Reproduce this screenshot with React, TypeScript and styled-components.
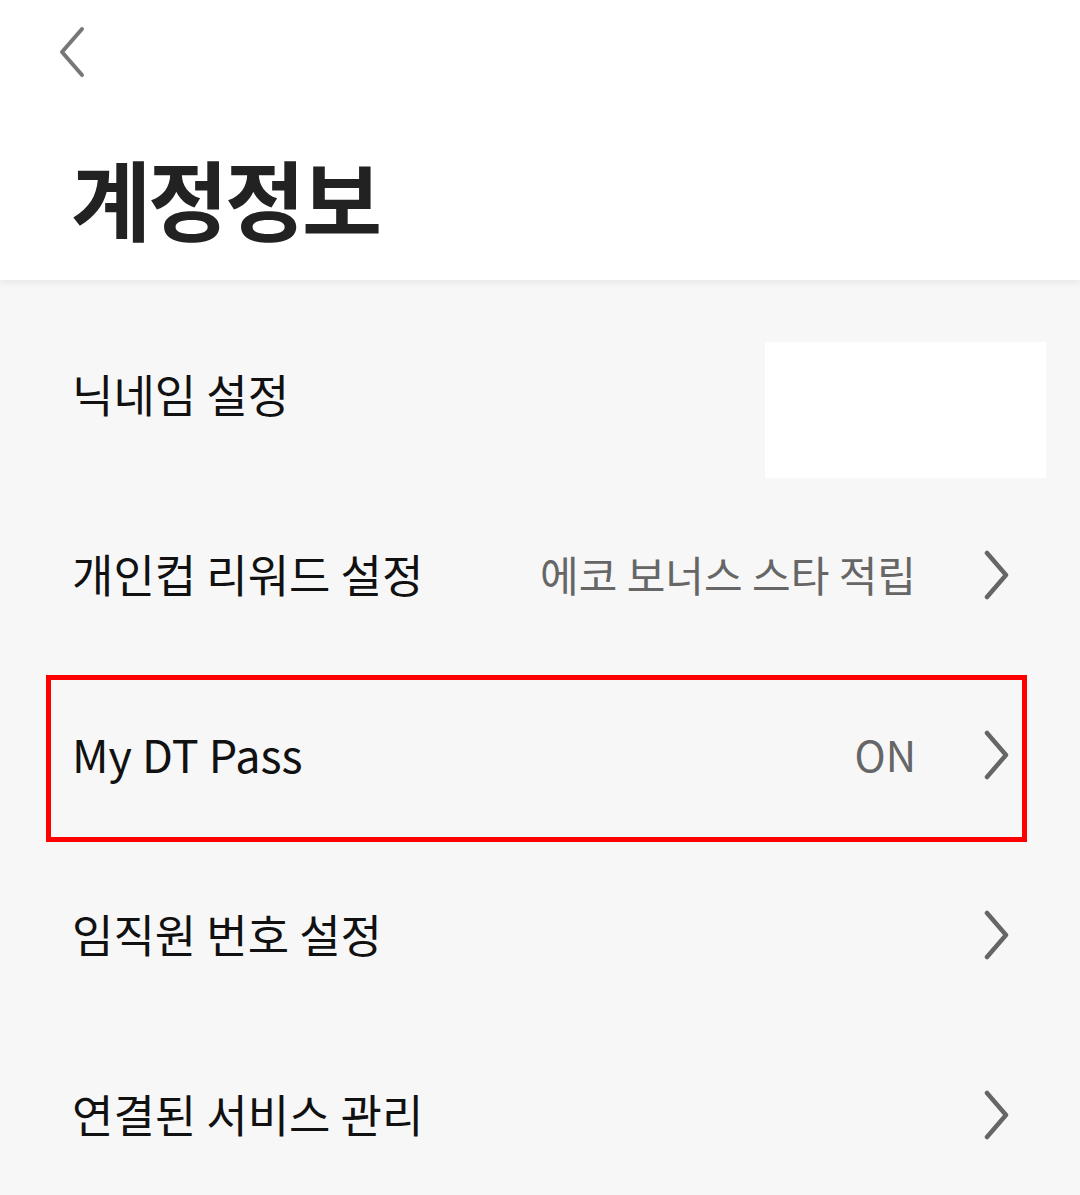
import React from "react";
import styled, { createGlobalStyle } from "styled-components";

const GlobalStyle = createGlobalStyle`
	html, body {
		margin: 0;
		padding: 0;
		background: #f7f7f7;
	}
	body {
		font-family: "Noto Sans CJK KR", "Noto Sans", sans-serif;
	}
`;

type RowItem = {
	label: string;
	value?: string;
	arrow: boolean;
	masked?: boolean;
	highlighted?: boolean;
};

const rows: RowItem[] = [
	{ label: "닉네임 설정", arrow: false, masked: true },
	{ label: "개인컵 리워드 설정", value: "에코 보너스 스타 적립", arrow: true },
	{ label: "My DT Pass", value: "ON", arrow: true, highlighted: true },
	{ label: "임직원 번호 설정", arrow: true },
	{ label: "연결된 서비스 관리", arrow: true },
];

const ChevronRight = () => (
	<svg width='26' height='50' viewBox='0 0 26 50'>
		<path
			d='M3 3 L22 25 L3 47'
			fill='none'
			stroke='#666'
			strokeWidth='4.5'
			strokeLinecap='round'
			strokeLinejoin='round'
		/>
	</svg>
);

const ChevronLeft = () => (
	<svg width='28' height='52' viewBox='0 0 28 52'>
		<path
			d='M24 3 L4 26 L24 49'
			fill='none'
			stroke='#777'
			strokeWidth='4'
			strokeLinecap='round'
			strokeLinejoin='round'
		/>
	</svg>
);

export default function App() {
	return (
		<>
			<GlobalStyle />
			<Page>
				<Header>
					<BackButton aria-label='back'>
						<ChevronLeft />
					</BackButton>
					<Title>계정정보</Title>
				</Header>
				<List>
					{rows.map((item, index) => (
						<Row key={index} highlighted={item.highlighted}>
							<Label>{item.label}</Label>
							<Right>
								{item.masked && <MaskBox />}
								{item.value && <Value>{item.value}</Value>}
								{item.arrow && (
									<Arrow>
										<ChevronRight />
									</Arrow>
								)}
							</Right>
						</Row>
					))}
				</List>
			</Page>
		</>
	);
}

const Page = styled.div`
	width: 1080px;
	min-height: 1195px;
	background: #f7f7f7;
	overflow: hidden;
`;

const Header = styled.header`
	height: 280px;
	background: #fff;
	box-sizing: border-box;
	padding: 26px 0 0 0;
	position: relative;
	box-shadow: 0 2px 8px rgba(0, 0, 0, 0.08);
	z-index: 1;
`;

const BackButton = styled.button`
	display: block;
	border: none;
	background: none;
	padding: 0;
	margin-left: 58px;
	height: 52px;
	cursor: pointer;
`;

const Title = styled.h1`
	margin: 76px 0 0 71px;
	font-size: 87px;
	line-height: 1;
	font-weight: 700;
	color: #222;
	letter-spacing: -3px;
`;

const List = styled.div`
	padding-top: 25px;
`;

const Row = styled.div<{ highlighted?: boolean }>`
	position: relative;
	height: 180px;
	display: flex;
	align-items: center;
	justify-content: space-between;
	padding: 0 72px 0 72px;
	&::after {
		content: "";
		display: ${(p) => (p.highlighted ? "block" : "none")};
		position: absolute;
		left: 46px;
		top: 10px;
		width: 981px;
		height: 167px;
		box-sizing: border-box;
		border: 5px solid #ff0000;
		pointer-events: none;
	}
`;

const Label = styled.span`
	font-size: 45px;
	color: #111;
	margin-top: -3px;
`;

const Right = styled.div`
	display: flex;
	align-items: center;
	gap: 68px;
`;

const Value = styled.span`
	font-size: 42px;
	color: #666;
	margin-top: -3px;
`;

const Arrow = styled.span`
	display: flex;
	align-items: center;
	margin-right: -2px;
`;

const MaskBox = styled.div`
	width: 281px;
	height: 136px;
	background: #fff;
	margin-top: 30px;
	margin-right: -38px;
`;
